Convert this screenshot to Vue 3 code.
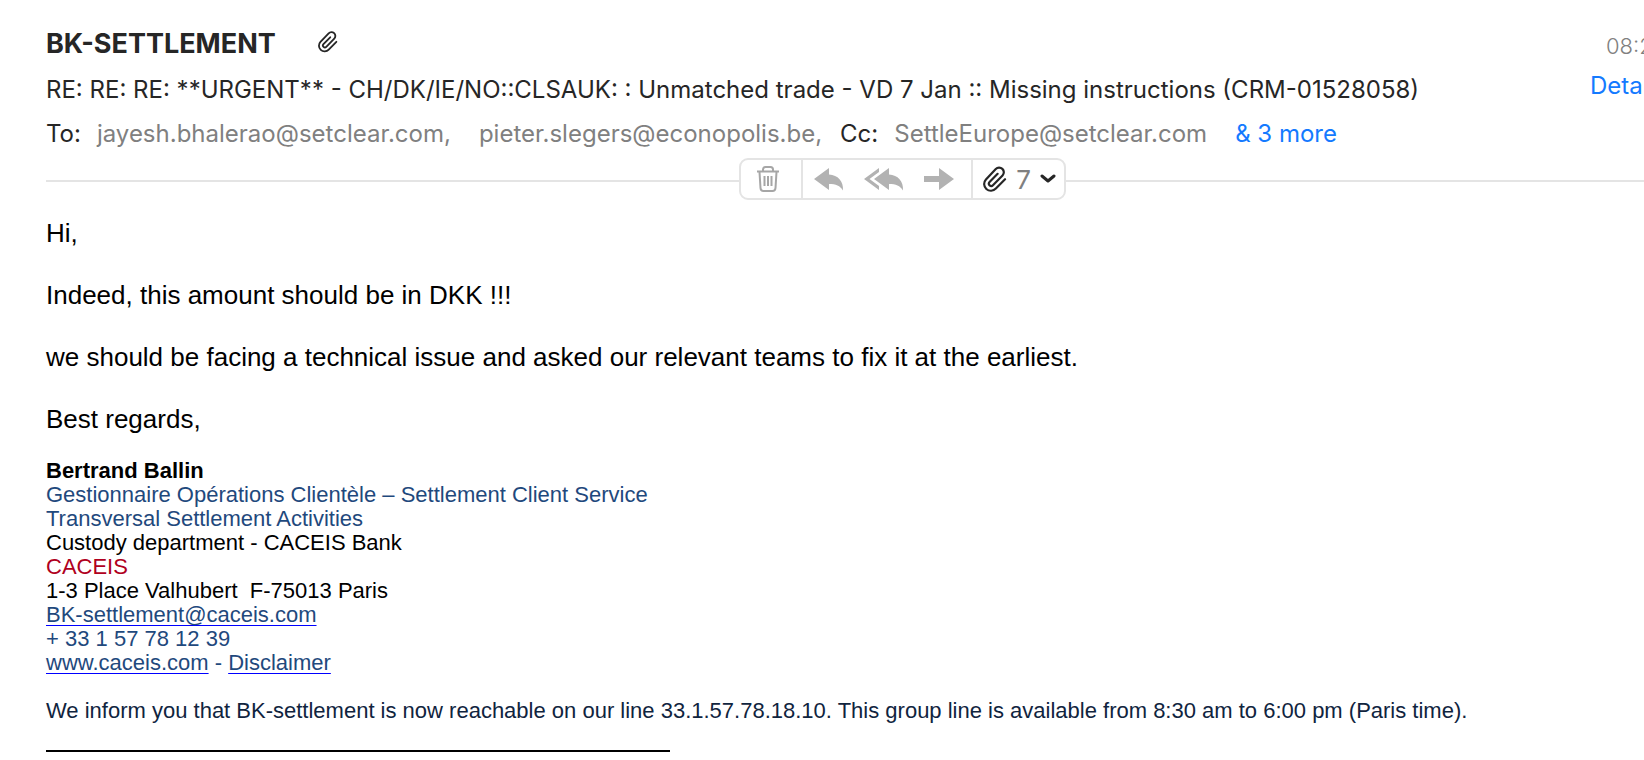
<script setup>
const signature = [
  { kind: 'name', text: 'Bertrand Ballin' },
  { kind: 'role', text: 'Gestionnaire Opérations Clientèle – Settlement Client Service' },
  { kind: 'role', text: 'Transversal Settlement Activities' },
  { kind: 'plain', text: 'Custody department - CACEIS Bank' },
  { kind: 'brand', text: 'CACEIS' },
  { kind: 'plain', text: '1-3 Place Valhubert\u00a0 F-75013 Paris' },
]
const clip = 'M21.2 11.8l-8.4 8.5a6 6 0 0 1-9.100-8.400l9-9.500a4.200 4.200 0 0 1 6.200 5.900l-8.800 9a2.100 2.100 0 0 1-3.100-2.900l7.400-7.600'
</script>

<template>
  <main class="mail">
    <header class="head">
      <div class="info">
        <div class="sender">
          <h1>BK-SETTLEMENT</h1>
          <svg class="clip-small" viewBox="1 0 22 24"><path :d="clip" /></svg>
        </div>
        <h2>RE: RE: RE: **URGENT** - CH/DK/IE/NO::CLSAUK: : Unmatched trade - VD 7 Jan :: Missing instructions (CRM-01528058)</h2>
        <div class="people">
          <span class="label">To:</span>
          <span class="addr">jayesh.bhalerao@setclear.com,</span>
          <span class="addr second">pieter.slegers@econopolis.be,</span>
          <span class="label cc">Cc:</span>
          <span class="addr">SettleEurope@setclear.com</span>
          <button type="button" class="link more">&amp; 3 more</button>
        </div>
      </div>
      <div class="meta">
        <time>08:2</time>
        <button type="button" class="link">Deta</button>
      </div>
    </header>

    <div class="bar">
      <span class="line left"></span>
      <div class="tools">
        <div class="group bin">
          <button type="button" aria-label="Delete">
            <svg width="22" height="26" viewBox="0 0 22 26" class="trash">
              <path d="M0 5.500h22M6 5V3.500Q6 1 8.500 1h5Q16 1 16 3.500V5M2.500 6l1 16q.2 3 3 3h9q2.800 0 3-3l1-16M7.500 10v10M11 10v10M14.500 10v10" />
            </svg>
          </button>
        </div>
        <div class="group arrows">
          <button type="button" aria-label="Reply">
            <svg width="30" height="24" viewBox="0 0 30 24"><path d="M0 12 15 1v6.500C24 8 29.500 14 29 23.500 26 18.500 22 17 15 17v6z" /></svg>
          </button>
          <button type="button" aria-label="Reply all">
            <svg width="40" height="24" viewBox="0 0 40 24"><path d="M10 12 25 1v6.500C34 8 39.500 14 39 23.500 36 18.500 32 17 25 17v6zM15 1v4L5.500 12 15 19v4L0 12z" /></svg>
          </button>
          <button type="button" aria-label="Forward">
            <svg width="30" height="24" viewBox="0 0 30 24"><path d="M0 9h15V1l15 11-15 11v-8H0z" /></svg>
          </button>
        </div>
        <button type="button" class="group files" aria-label="7 attachments">
          <svg class="clip-large" viewBox="1 0 22 24"><path :d="clip" /></svg>
          <span>7</span>
          <svg width="16" height="10" viewBox="0 0 16 10" class="chev"><path d="m2 2 6 5 6-5" /></svg>
        </button>
      </div>
      <span class="line right"></span>
    </div>

    <article class="body">
      <p>Hi,</p>
      <p>Indeed, this amount should be in DKK !!!</p>
      <p>we should be facing a technical issue and asked our relevant teams to fix it at the earliest.</p>
      <p>Best regards,</p>
      <address>
        <div v-for="row in signature" :key="row.text" :class="row.kind">{{ row.text }}</div>
        <div class="role"><a href="#mail">BK-settlement@caceis.com</a></div>
        <div class="role">+ 33 1 57 78 12 39</div>
        <div class="role"><a href="#site">www.caceis.com</a> - <a href="#disclaimer">Disclaimer</a></div>
      </address>
      <p class="notice">We inform you that BK-settlement is now reachable on our line 33.1.57.78.18.10. This group line is available from 8:30 am to 6:00 pm (Paris time).</p>
      <hr />
    </article>
  </main>
</template>

<style>
body { margin: 0; background: #fff; }
</style>

<style scoped>
.mail {
  box-sizing: border-box;
  padding: 24px 0 0 46px;
  overflow: hidden;
  font-family: Inter, "Liberation Sans", sans-serif;
  font-size: 24px;
  color: #262626;
  white-space: nowrap;
}
button { padding: 0; border: 0; background: none; font: inherit; color: inherit; }
h1, h2, p { margin: 0; }
.head { display: flex; justify-content: space-between; }
.sender { display: flex; align-items: center; gap: 42px; height: 40px; }
h1 { font-size: 27px; line-height: 40px; font-weight: 700; }
.clip-small { width: 20px; height: 24px; margin-bottom: 4px; }
.clip-small, .clip-large { fill: none; stroke: #262626; stroke-width: 2; stroke-linecap: round; }
h2 { font-size: 24px; font-weight: 400; line-height: 44px; margin-top: 4px; }
.people { display: flex; line-height: 44px; }
.addr { color: #808080; margin-left: 16px; }
.second { margin-left: 28px; }
.cc { margin-left: 18px; }
.link { color: #147aff; cursor: pointer; }
.more { margin-left: 28px; }
.meta { width: 54px; display: flex; flex-direction: column; align-items: flex-start; line-height: 40px; }
.meta .link { line-height: 36px; }
time { margin-left: 16px; color: #808080; font-size: 22px; font-weight: 300; line-height: 44px; }
.bar { display: flex; align-items: center; margin-top: 2px; }
.line { height: 2px; margin-top: 4px; background: #e4e4e4; }
.left { flex: 6; }
.right { flex: 5; }
.tools { display: flex; box-sizing: border-box; height: 42px; border: 2px solid #e4e4e4; border-radius: 9px; }
.group { box-sizing: border-box; display: flex; align-items: center; }
.group svg { display: block; }
.bin { width: 60px; padding-left: 16px; }
.trash { fill: none; stroke: #a6a6a6; stroke-width: 2; }
.arrows { width: 172px; padding-left: 11px; gap: 20px; border-left: 2px solid #e4e4e4; border-right: 2px solid #e4e4e4; fill: #b2b2b2; }
.files { width: 91px; padding-left: 10px; gap: 9px; color: #808080; font-size: 26px; }
.clip-large { width: 24px; height: 27px; }
.chev { fill: none; stroke: #262626; stroke-width: 3; stroke-linecap: round; stroke-linejoin: round; }
.body { padding-top: 17px; font-family: "Liberation Sans", Arial, sans-serif; font-size: 26px; line-height: 32px; color: #000; }
.body p + p { margin-top: 30px; }
address { margin-top: 24px; font-size: 22px; font-style: normal; line-height: 24px; }
.name { font-weight: 700; }
.role, .role a { color: #1f497d; }
.role a { text-decoration: underline #00f 1px; text-underline-offset: 3px; }
.brand { color: #b00020; }
.body .notice { margin-top: 24px; font-size: 22px; line-height: 24px; color: #10243e; }
hr { width: 624px; height: 2px; margin: 27px 0 8px; border: 0; background: #000; }
</style>
